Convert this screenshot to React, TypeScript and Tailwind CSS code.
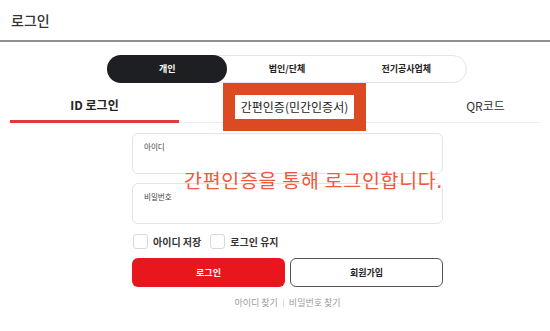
import React from "react";

const font = { fontFamily: '"Noto Sans CJK KR", "Noto Sans", sans-serif' };

export default function App() {
  return (
    <div className="w-[550px] h-[331px] bg-white overflow-hidden relative text-[#222]" style={font}>
      {/* header */}
      <div className="h-[40px] flex items-center pl-[11px] pb-[1px]">
        <span className="text-[14px] font-medium text-[#333] leading-none">로그인</span>
      </div>
      <div className="h-[2px] bg-[#8f8f8f]" />

      {/* segmented */}
      <div className="flex justify-center pt-[13px] pl-[24px]">
        <div className="w-[360px] h-[28px] rounded-full border border-[#e3e5ea] flex">
          <div className="w-[121px] -ml-px -my-px h-[28px] rounded-full bg-[#1e1f22] text-white flex items-center justify-center text-[9px] font-bold">개인</div>
          <div className="w-[120px] flex items-center justify-center text-[9px] font-bold text-[#222]">법인/단체</div>
          <div className="w-[120px] flex items-center justify-center text-[9px] font-bold text-[#222]">전기공사업체</div>
        </div>
      </div>

      {/* tabs */}
      <div className="mx-[10px] h-[40px] flex border-b border-[#ececec] relative">
        <div className="w-[169px] flex items-center justify-center text-[12px] font-bold border-b-[3px] border-[#e5383b] -mb-px pt-[6px]">ID 로그인</div>
        <div className="w-[230px] flex items-center justify-center relative">
          <div className="absolute left-[44px] top-[0px] w-[143px] h-[48px] bg-[#db4a22] flex items-center justify-center pb-[1px]">
            <div className="w-[119px] h-[24px] bg-white flex items-center justify-center text-[12px] text-[#222]">간편인증(민간인증서)</div>
          </div>
        </div>
        <div className="flex-1 flex items-center justify-center pl-[22px] text-[12px] text-[#333] pt-[6px]">QR코드</div>
      </div>

      {/* form */}
      <div className="w-[311px] ml-[132px] mt-[10px] flex flex-col relative">
        <div className="h-[41px] rounded-[6px] border border-[#e4e4e4] px-[11px] pt-[9px] text-[7.5px] text-[#444] leading-none">아이디</div>
        <div className="h-[41px] mt-[9px] rounded-[6px] border border-[#e4e4e4] px-[11px] pt-[9px] text-[7.5px] text-[#444] leading-none">비밀번호</div>
        <div className="absolute left-[52px] top-[37px] text-[19.5px] text-[#f0593d] leading-none whitespace-nowrap tracking-[0.7px]">간편인증을 통해 로그인합니다.</div>

        <div className="flex items-center mt-[9px] h-[16px]">
          <div className="w-[15px] h-[15px] rounded-[3px] border border-[#d8d8d8] ml-[1px]" />
          <span className="ml-[5px] text-[10px] font-bold text-[#333]">아이디 저장</span>
          <div className="w-[15px] h-[15px] rounded-[3px] border border-[#d8d8d8] ml-[9px]" />
          <span className="ml-[5px] text-[10px] font-bold text-[#333]">로그인 유지</span>
        </div>

        <div className="flex gap-[5px] mt-[9px]">
          <div className="w-[153px] h-[29px] rounded-[6px] bg-[#e8171d] text-white text-[9px] font-bold flex items-center justify-center">로그인</div>
          <div className="w-[153px] h-[29px] rounded-[6px] border-[1.5px] border-[#555] text-[#222] text-[9px] font-bold flex items-center justify-center">회원가입</div>
        </div>

        <div className="flex justify-center items-center mt-[9px] text-[9px] text-[#9a9a9a]">
          <span>아이디 찾기</span>
          <span className="mx-[5px] w-px h-[8px] bg-[#dcdcdc]" />
          <span>비밀번호 찾기</span>
        </div>
      </div>
    </div>
  );
}
